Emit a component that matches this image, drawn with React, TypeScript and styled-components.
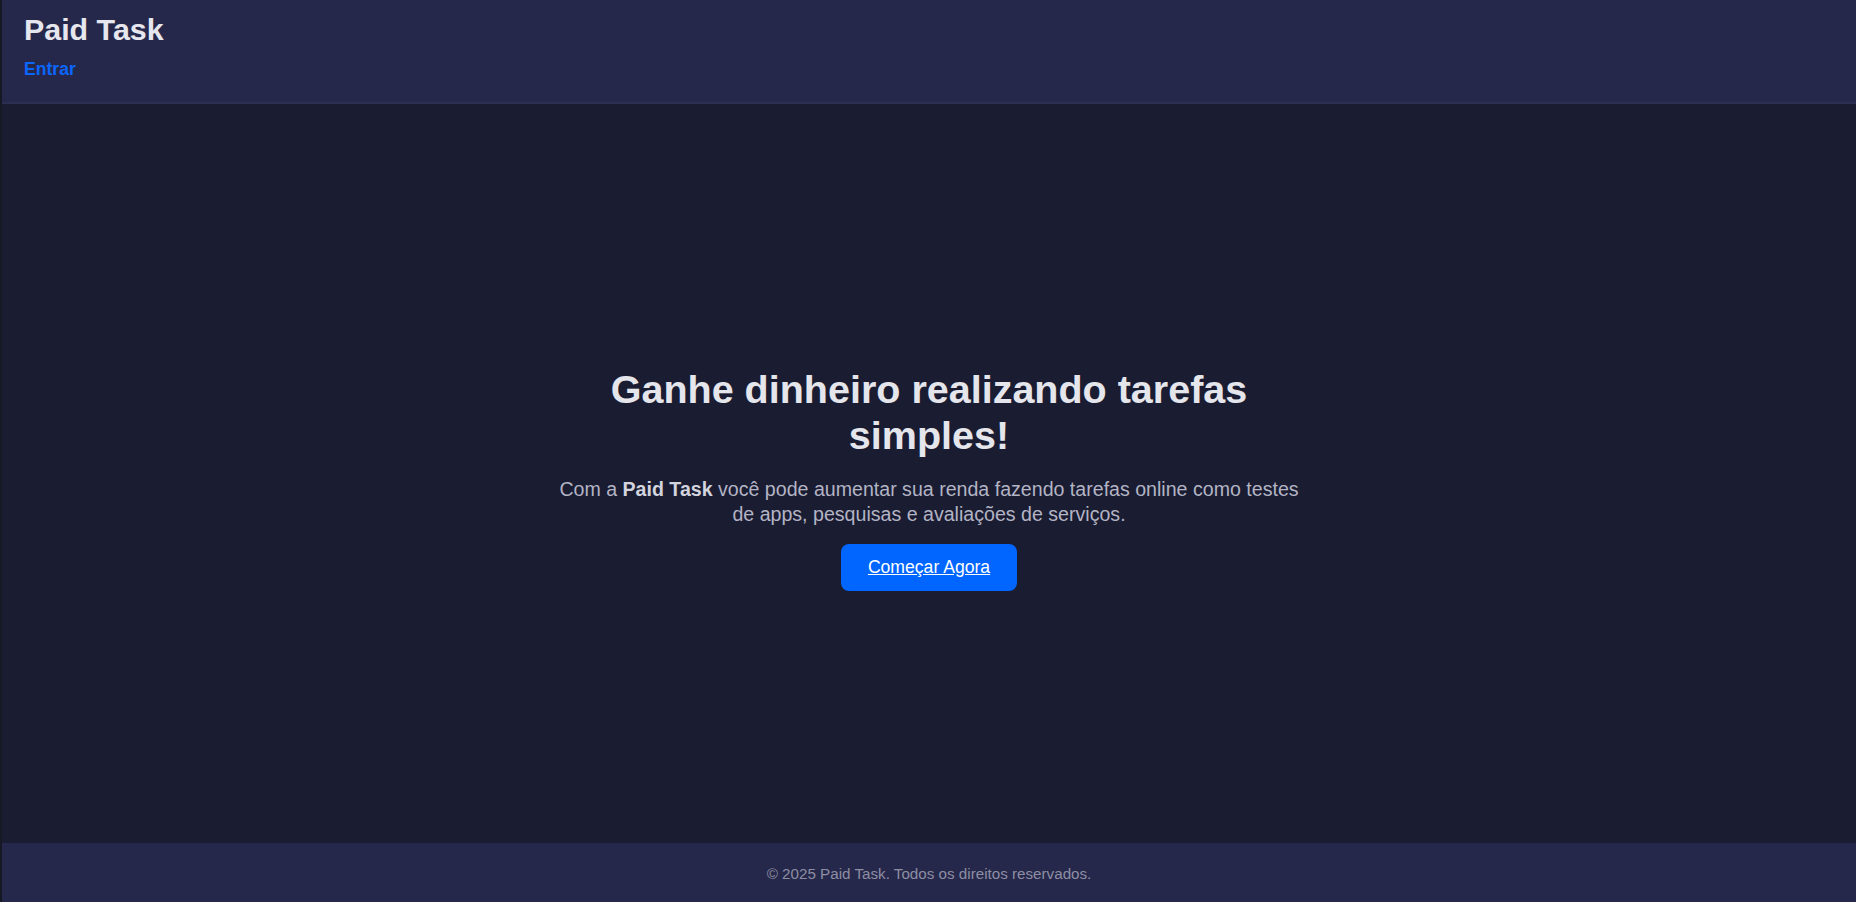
import React from "react";
import styled, { createGlobalStyle } from "styled-components";

const GlobalStyle = createGlobalStyle`
  html, body {
    margin: 0;
    padding: 0;
    background: #171826;
  }
  body {
    font-family: "Liberation Sans", Arial, Helvetica, sans-serif;
    color: #e4e4ec;
  }
  * { box-sizing: border-box; }
`;

const Page = styled.div`
  min-height: 100vh;
  display: flex;
  flex-direction: column;
  margin-left: 2px;
  background: #1a1c32;
`;

const Header = styled.header`
  display: flex;
  flex-direction: column;
  align-items: flex-start;
  gap: 12px;
  padding: 12px 22px 22px;
  background: #26284b;
  border-bottom: 2px solid #2c2f52;
`;

const Brand = styled.h1`
  margin: 0;
  font-size: 30.4px;
  font-weight: 700;
  color: #e6e6ee;
`;

const Nav = styled.nav`
  display: flex;
  gap: 20px;
`;

const NavLink = styled.a`
  font-size: 17.6px;
  font-weight: 700;
  color: #0a66ff;
  text-decoration: none;
`;

const Main = styled.main`
  flex: 1;
  display: flex;
  align-items: center;
  justify-content: center;
  padding: 10px 20px 0;
`;

const Hero = styled.section`
  max-width: 750px;
  display: flex;
  flex-direction: column;
  align-items: center;
  text-align: center;
`;

const Title = styled.h2`
  margin: 0 0 19px;
  font-size: 39.5px;
  line-height: 46px;
  font-weight: 700;
  color: #e5e5ec;
`;

const Lead = styled.p`
  margin: 0 0 17px;
  font-size: 19.6px;
  line-height: 25px;
  color: #b3b4c4;

  strong {
    color: #d3d4de;
  }
`;

const CtaButton = styled.a`
  display: inline-block;
  padding: 13px 27px;
  border-radius: 8px;
  background: #0066ff;
  color: #ffffff;
  font-size: 17.6px;
  text-decoration: underline;
  cursor: pointer;
`;

const Footer = styled.footer`
  padding: 22px 20px 20px;
  background: #26284b;
  text-align: center;
  font-size: 15.2px;
  color: #8d8ea3;
`;

export default function App() {
  return (
    <>
      <GlobalStyle />
      <Page>
        <Header>
          <Brand>Paid Task</Brand>
          <Nav>
            <NavLink href="#">Entrar</NavLink>
          </Nav>
        </Header>
        <Main>
          <Hero>
            <Title>
              Ganhe dinheiro realizando tarefas simples!
            </Title>
            <Lead>
              Com a <strong>Paid Task</strong> você pode aumentar sua renda
              fazendo tarefas online como testes de apps, pesquisas e avaliações
              de serviços.
            </Lead>
            <CtaButton href="#">Começar Agora</CtaButton>
          </Hero>
        </Main>
        <Footer>© 2025 Paid Task. Todos os direitos reservados.</Footer>
      </Page>
    </>
  );
}
